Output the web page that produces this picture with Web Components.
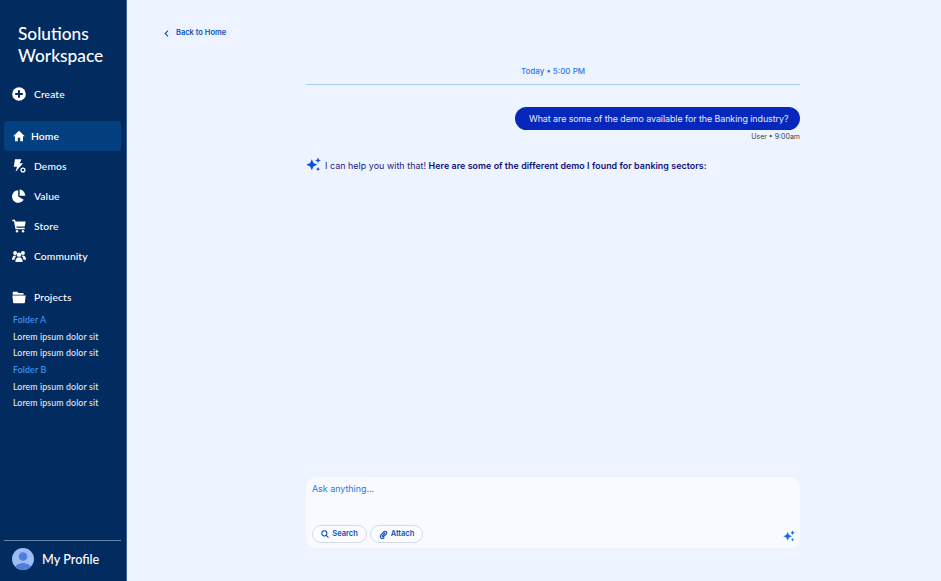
<!DOCTYPE html>
<html lang="en"><head><meta charset="utf-8"><title>Solutions Workspace</title>
<style>
html,body{margin:0;height:100%;background:#eef4ff}
app-shell{height:581px}
</style></head><body>
<app-shell>
  <side-bar slot="side"></side-bar>
  <chat-view slot="main"></chat-view>
</app-shell>
<script>
const SPARK='<svg viewBox="0 0 16 16" width="100%" height="100%" fill="currentColor"><path d="M6.200 2.500 8 6.500 12 8.300 8 10.100 6.200 14.100 4.400 10.100 .4 8.300 4.400 6.500Z"/><path d="M12.800 .6 13.700 2.700 15.800 3.600 13.700 4.500 12.800 6.600 11.900 4.500 9.800 3.600 11.900 2.700Z"/><path d="M12.800 10.600 13.500 12.200 15.100 12.900 13.500 13.600 12.800 15.200 12.100 13.600 10.500 12.900 12.100 12.200Z"/></svg>';
const ICONS={
 create:'<svg viewBox="0 0 14 14" width="14" height="14"><circle cx="7" cy="7" r="6.800" fill="#fff"/><path d="M7 3.200v7.600M3.200 7h7.600" stroke="#022b60" stroke-width="2"/></svg>',
 home:'<svg viewBox="0 0 12 12" width="12" height="12" fill="#fff"><path d="M6 .8 11.800 6.300H10V11.300H7.200V7.800H4.800V11.300H2V6.300H.2Z"/></svg>',
 demos:'<svg viewBox="0 0 14 14" width="14" height="14"><path fill="#fff" d="M3 .3H9.500L7.600 4.200H11L3.500 13 5 7.800H1.800Z"/><circle cx="11" cy="11" r="1.900" fill="none" stroke="#fff" stroke-width="1.300"/></svg>',
 value:'<svg viewBox="0 0 14 14" width="14" height="14" fill="#fff"><path d="M6.200 1.200V7.600L11.700 10.800A6.300 6.300 0 1 1 6.200 1.200Z"/><path d="M7.600 .6A6.300 6.300 0 0 1 13.300 6.800H7.600Z"/></svg>',
 store:'<svg viewBox="0 0 14 14" width="14" height="14" fill="#fff"><path d="M.3 .8H3L3.500 2.500H13.700L12.700 7.500H4.500L4.700 8.700H12.700V10.200H3.500L2 2.300H.3Z"/><circle cx="5" cy="12.200" r="1.200"/><circle cx="11" cy="12.200" r="1.200"/></svg>',
 community:'<svg viewBox="0 0 15 13" width="15" height="13" fill="#fff"><circle cx="7.500" cy="4.500" r="2.400"/><path d="M3.600 12.400C3.600 9 5.300 7.400 7.500 7.400S11.400 9 11.400 12.400Z"/><circle cx="3.300" cy="2.800" r="2.100"/><circle cx="11.700" cy="2.800" r="2.100"/><path d="M0 10C0 6.800 1.500 5.300 3.300 5.300 4 5.300 4.500 5.500 5 5.800 3.600 6.800 2.800 8.200 2.700 10ZM15 10C15 6.800 13.500 5.300 11.700 5.300 11 5.300 10.500 5.500 10 5.800 11.400 6.800 12.200 8.200 12.300 10Z"/></svg>',
 folder:'<svg viewBox="0 0 14 13" width="14" height="13" fill="#fff"><path d="M1.300 .8H5.200L6.500 2.100H11.500V3.700H.7V1.400Z"/><path d="M.4 4.600H13.600L12.900 11.500Q12.800 12.300 12 12.300H2Q1.200 12.300 1.100 11.500Z"/></svg>',
 search:'<svg viewBox="0 0 10 10" width="8" height="8" fill="none" stroke="#0b4fb8" stroke-width="1.300"><circle cx="4.200" cy="4.200" r="3.200"/><path d="M6.600 6.600 9.400 9.400"/></svg>',
 attach:'<svg viewBox="0 0 10 10" width="9" height="9" fill="none" stroke="#0b4fb8" stroke-width="1.200" stroke-linecap="round"><path d="M6.800 3.200 3.700 6.400a.8.8 0 0 0 1.100 1.100L8.300 4.200a1.800 1.800 0 0 0-2.500-2.500L2.200 5.300a2.400 2.400 0 0 0 3.400 3.400"/></svg>'
};
function def(name,css,html){
  customElements.define(name,class extends HTMLElement{
    constructor(){super();this.attachShadow({mode:'open'}).innerHTML='<style>'+css+'</style>'+(typeof html==='function'?html(this):html);}
    connectedCallback(){ if(typeof html==='function') this.shadowRoot.innerHTML='<style>'+css+'</style>'+html(this); }
  });
}
def('app-shell',':host{display:flex;width:941px;font-family:Inter,sans-serif}::slotted([slot=side]){flex:none}::slotted([slot=main]){flex:1;min-width:0}','<slot name="side"></slot><slot name="main"></slot>');

customElements.define('nav-item',class extends HTMLElement{
  constructor(){super();this.attachShadow({mode:'open'});}
  connectedCallback(){
    const ic=this.getAttribute('icon');
    this.shadowRoot.innerHTML=`<style>
    :host{display:flex;align-items:center;height:30px;box-sizing:border-box;padding-left:8px;border-radius:3px;font:500 10.300px/1 "Lato",sans-serif;color:#fff;letter-spacing:.1px}
    :host([active]){background:#04407f;font-weight:600}
    .i{width:14px;height:14px;display:flex;align-items:center;justify-content:center;margin-right:8px}
    :host([active]) .i{margin-right:5px}
    </style><span class="i">${ICONS[ic]}</span><span><slot></slot></span>`;
  }
});
def('folder-group',`:host{display:block;font:400 8.800px/16px "Lato",sans-serif;color:#f1f4fa;letter-spacing:.12px;padding-left:13px;margin-bottom:1px}
.t{display:block;color:#3f9bff;font-weight:500;height:17px;line-height:16px}
::slotted(*){display:block}`,
 el=>`<span class="t">${el.getAttribute('name')}</span><slot></slot>`);

def('side-bar',`:host{display:flex;flex-direction:column;width:127px;height:581px;box-sizing:border-box;background:#022b60;border-right:1px solid #3a5f96;color:#fff;padding:0 5px 0 4px;font-family:"Lato",sans-serif}
h1{margin:0;padding:23px 0 0 14px;font:500 17.300px/22px "Lato",sans-serif;height:46px}
.create{margin-top:10px}
.mid{margin-top:12px;display:flex;flex-direction:column}
.projects{margin-top:11px}
.folders{margin:0 -4px 0 -4px;display:flex;flex-direction:column}
.grow{flex:1}
.profile{border-top:1px solid #6b86ab;height:36px;margin-bottom:4px;display:flex;align-items:center;padding-left:8px;gap:8px;font:500 12.700px/1 "Lato",sans-serif}
`,`<h1>Solutions<br>Workspace</h1>
<nav-item class="create" icon="create">Create</nav-item>
<div class="mid"><nav-item icon="home" active>Home</nav-item><nav-item icon="demos">Demos</nav-item><nav-item icon="value">Value</nav-item><nav-item icon="store">Store</nav-item><nav-item icon="community">Community</nav-item></div>
<nav-item class="projects" icon="folder">Projects</nav-item>
<div class="folders"><folder-group name="Folder A"><span>Lorem ipsum dolor sit</span><span>Lorem ipsum dolor sit</span></folder-group>
<folder-group name="Folder B"><span>Lorem ipsum dolor sit</span><span>Lorem ipsum dolor sit</span></folder-group></div>
<div class="grow"></div>
<div class="profile"><svg width="22" height="22" viewBox="0 0 22 22"><defs><clipPath id="c"><circle cx="11" cy="11" r="11"/></clipPath></defs><g clip-path="url(#c)"><rect width="22" height="22" fill="#9dbcf5"/><circle cx="11" cy="8.500" r="4.300" fill="#4f7fd9"/><ellipse cx="11" cy="20.500" rx="8" ry="5.500" fill="#4f7fd9"/></g></svg><span>My Profile</span></div>`);

def('chat-pill',`:host{display:inline-flex;align-items:center;justify-content:center;gap:3px;height:18px;box-sizing:border-box;border:1px solid #d5dbe6;border-radius:9px;font:600 7.500px/1 Inter,sans-serif;color:#0b4fb8;background:#fbfcff}
span{display:flex}`,el=>`<span>${ICONS[el.getAttribute('icon')]}</span><slot></slot>`);

def('chat-view',`:host{display:block;position:relative;height:581px;box-sizing:border-box;padding:0 37px;background:#eef4ff}
.wrap{display:flex;flex-direction:column;height:100%}
.back{display:flex;align-items:center;gap:7px;height:10px;margin:28px 0 0;color:#0b4fb8;font:600 7.500px/10px Inter,sans-serif}
.col{flex:1;margin:0 0 33px 142px;width:494px;display:flex;flex-direction:column}
.today{margin-top:28px;text-align:center;font:500 8px/10px Inter,sans-serif;color:#2a78e4;height:13px}
.rule{height:1px;background:#a9cdf6;margin-top:5px}
.bubble{align-self:flex-end;margin-top:22px;width:285px;height:23px;box-sizing:border-box;background:#0627bb;border-radius:12px;color:#e6ebff;font:400 8.900px/23px Inter,sans-serif;letter-spacing:-.06px;padding-left:14px;white-space:nowrap}
.meta{align-self:flex-end;margin-top:2px;font:400 7px/9px Inter,sans-serif;color:#3c4250}
.ans{display:flex;align-items:center;margin-top:17px;color:#1b1a83;font:400 8.900px/16px Inter,sans-serif;letter-spacing:.05px}
.ans b{font-weight:600;color:#10107a}
.sp{width:15px;height:15px;color:#0f4fe0;margin-right:4px;margin-top:-3px}
.grow{flex:1}
.box{height:71px;box-sizing:border-box;background:#f8faff;border-radius:10px;padding:6px 6px 5px 6px;display:flex;flex-direction:column;position:relative}
.ph{font:400 8.900px/11px Inter,sans-serif;color:#2a78e4}
.row{margin-top:auto;display:flex;align-items:flex-end;gap:3px}
chat-pill.s{width:55px}chat-pill.a{width:53px}
.sp2{display:flex;width:12px;height:12px;color:#0f6cf0;position:absolute;right:5px;bottom:6px}
`,`<div class="wrap">
<div class="back"><svg width="5" height="7" viewBox="0 0 5 7" fill="none" stroke="#0b4fb8" stroke-width="1.100"><path d="M4 .7 1.200 3.500 4 6.300"/></svg><span>Back to Home</span></div>
<div class="col">
<div class="today">Today • 5:00 PM</div><div class="rule"></div>
<div class="bubble">What are some of the demo available for the Banking industry?</div>
<div class="meta">User • 9:00am</div>
<div class="ans"><span class="sp">${SPARK}</span><span>I can help you with that! <b>Here are some of the different demo I found for banking sectors:</b></span></div>
<div class="grow"></div>
<div class="box"><div class="ph">Ask anything...</div><div class="row"><chat-pill class="s" icon="search">Search</chat-pill><chat-pill class="a" icon="attach">Attach</chat-pill></div><span class="sp2">${SPARK}</span></div>
</div></div>`);
</script>
</body></html>
